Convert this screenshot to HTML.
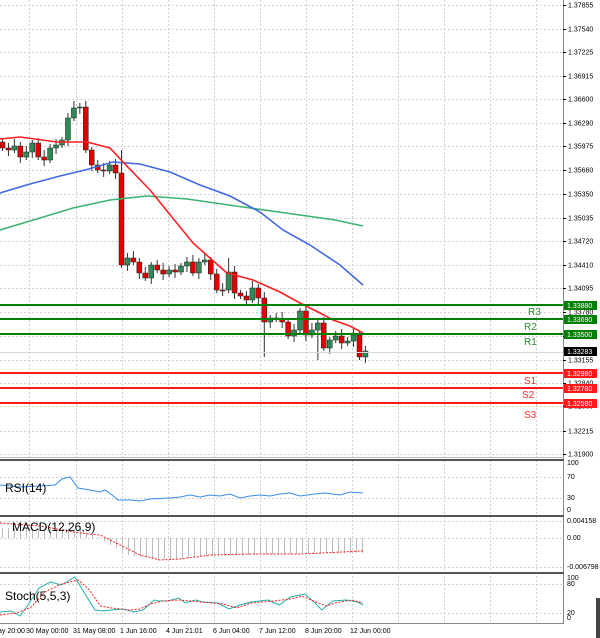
<!DOCTYPE html>
<html><head><meta charset="utf-8"><style>
html,body{margin:0;padding:0;background:#fff;}
svg{display:block;font-family:"Liberation Sans",sans-serif;}
</style></head><body>
<svg id="s" width="600" height="638" viewBox="0 0 600 638" xmlns="http://www.w3.org/2000/svg">
<rect width="600" height="638" fill="#fff"/>
<g id="grid" stroke="#d0d0d0" stroke-dasharray="2,2" stroke-width="1"></g>
<g id="ind"></g>
<g id="cand"></g>
<g id="lines" fill="none" stroke-width="1.6"></g>
<g id="axis" font-size="7" fill="#000"></g>
</svg>
<script>
(function(){
var NS="http://www.w3.org/2000/svg";
function el(p,t,a,txt){var e=document.createElementNS(NS,t);for(var k in a)e.setAttribute(k,a[k]);if(txt!==undefined)e.textContent=txt;document.getElementById(p).appendChild(e);return e;}
var gy=[5,29,52,76,99,123,146,170,194,218,241,265,288,312,336,360,383,406,431,454];
gy.forEach(function(y){el("grid","line",{x1:0,x2:563,y1:y+.5,y2:y+.5});});
var tx=[29,76,122,168,214,260,306,352,398,444,490,536];
tx.forEach(function(x){el("grid","line",{x1:x+.5,x2:x+.5,y1:0,y2:623});});
[477,498,521,538,567,584,613].forEach(function(y){el("grid","line",{x1:0,x2:563,y1:y+.5,y2:y+.5});});
el("axis","line",{x1:563.5,x2:563.5,y1:0,y2:623,stroke:"#888","stroke-width":1});
el("axis","line",{x1:0,x2:564,y1:457.5,y2:457.5,stroke:"#bbb"});
[460,516,573].forEach(function(y){el("axis","rect",{x:0,y:y-1,width:564,height:2,fill:"#555"});});
el("axis","line",{x1:0,x2:564,y1:623.5,y2:623.5,stroke:"#888"});
el("axis","rect",{x:596,y:598,width:4,height:40,fill:"#444"});
var pl=["1.37855","1.37540","1.37225","1.36915","1.36600","1.36290","1.35975","1.35660","1.35350","1.35035","1.34720","1.34410","1.34095","1.33780","1.33470","1.33155","1.32840","1.32530","1.32215","1.31900"];
pl.forEach(function(t,i){el("axis","line",{x1:563,x2:566,y1:gy[i]+.5,y2:gy[i]+.5,stroke:"#000"});el("axis","text",{x:568,y:gy[i]+2.5},t);});
[["100",465],["70",479],["30",500],["0",512],["0.004158",523],["0.00",540],["-0.006798",569],["100",580],["80",586],["20",615],["0",620]].forEach(function(a){el("axis","text",{x:567,y:a[1]},a[0]);});
[["ay 20:00",-2],["30 May 00:00",26],["31 May 08:00",73],["1 Jun 16:00",120],["4 Jun 21:01",166],["6 Jun 04:00",213],["7 Jun 12:00",259],["8 Jun 20:00",305],["12 Jun 00:00",350]].forEach(function(a){el("axis","text",{x:a[1],y:633},a[0]);});
function pts(a){return a.map(function(p){return p[0]+","+p[1]}).join(" ");}
function spts(a){return a.map(function(p){return (p[0]*1.117).toFixed(1)+","+p[1]}).join(" ");}
el("lines","polyline",{stroke:"#3cb371",points:pts([[0,230],[40,218],[73,208],[110,200],[147,196],[187,199],[243,207],[300,215],[335,220],[363,226]])});
el("lines","polyline",{stroke:"#4169e1",points:pts([[0,193],[30,184],[60,176],[85,170],[113,162],[140,164],[170,172],[200,185],[230,196],[260,212],[283,230],[310,245],[340,265],[363,285]])});
el("lines","polyline",{stroke:"#ff2020",points:pts([[0,139],[20,137],[57,142],[87,142],[110,148],[123,162],[150,190],[193,243],[227,273],[253,280],[280,292],[300,303],[320,313],[333,320],[350,326],[363,333]])});
var lv=[[305,"#008000","1.33880","R3",528,315],[319,"#008000","1.33690","R2",524,330],[334,"#008000","1.33500","R1",524,345],[373,"#ff1a1a","1.32980","S1",524,384],[388,"#ff1a1a","1.32780","S2",522,398],[403,"#ff1a1a","1.32590","S3",524,418]];
el("axis","line",{x1:0,x2:563,y1:352.5,y2:352.5,stroke:"#d8d8d8"});
lv.forEach(function(l){el("axis","rect",{x:0,y:l[0]-1,width:563,height:2,fill:l[1]});
el("axis","rect",{x:564,y:l[0]-4,width:33,height:9,fill:l[1]});
el("axis","text",{x:567,y:l[0]+3,fill:"#fff"},l[2]);
el("axis","text",{x:l[4],y:l[5],"font-size":"10",fill:l[1]=="#008000"?"#2e8b2e":"#ff3030"},l[3]);});
el("axis","rect",{x:564,y:347,width:33,height:9,fill:"#000"});
el("axis","text",{x:567,y:354,fill:"#fff"},"1.33283");
var c=[148,150,146,157,152,143,157,160,148,145,140,118,108,107,150,165,170,171,165,173,265,258,262,273,278,265,270,274,270,272,266,262,273,262,260,274,290,290,272,293,296,300,288,298,322,318,319,322,336,330,311,335,330,323,348,340,336,343,341,335,357,351];
var o=142;
for(var i=0;i<c.length;i++){var x=2+i*5.95;var cl=c[i];var up=cl<o;var tp=Math.min(o,cl),bt=Math.max(o,cl);
var hi=tp-3-(i*7%5),lo=bt+3+(i*3%6);if(i==44){lo=357;}if(i==20){hi=150}if(i==53){lo=360}if(i==38){hi=258}
el("cand","line",{x1:x+.5,x2:x+.5,y1:hi,y2:lo,stroke:"#333","stroke-width":1});
el("cand","rect",{x:x-2,y:tp,width:5,height:Math.max(1,bt-tp),fill:up?"#2e8b57":"#e00000",stroke:"#222","stroke-width":.5});
o=cl;}
el("ind","polyline",{fill:"none",stroke:"#3a8ee6","stroke-width":1,points:pts([[0,485],[20,487],[40,486],[55,485],[62,479],[70,477],[78,488],[90,490],[100,492],[105,490],[112,495],[118,500],[130,500],[140,501],[150,499],[170,498],[180,497],[190,495],[200,497],[210,495],[220,496],[230,494],[240,498],[250,496],[260,495],[270,496],[280,494],[290,493],[300,496],[315,494],[325,493],[340,495],[350,492],[363,493]])});
el("ind","text",{x:5,y:492,"font-size":"12",fill:"#000"},"RSI(14)");
var mh=[[0,528],[80,529],[100,538],[110,545],[130,556],[160,560],[200,557],[250,555],[363,553]];
function interp(a,x){for(var j=1;j<a.length;j++){if(x<=a[j][0]){var t=(x-a[j-1][0])/(a[j][0]-a[j-1][0]);return a[j-1][1]+t*(a[j][1]-a[j-1][1]);}}return a[a.length-1][1];}
for(var xx=2;xx<366;xx+=6){var v=interp(mh,xx);el("ind","line",{x1:xx+.5,x2:xx+.5,y1:538,y2:v,stroke:"#bbb","stroke-width":1});}
el("ind","polyline",{fill:"none",stroke:"#ff2020","stroke-width":1,"stroke-dasharray":"2,1.5",points:pts([[0,523],[40,526],[80,533],[100,535],[120,545],[140,555],[160,560],[180,559],[210,555],[250,554],[300,554],[363,551]])});
el("ind","text",{x:12,y:531,"font-size":"12",fill:"#000"},"MACD(12,26,9)");
el("ind","polyline",{fill:"none",stroke:"#20b2aa","stroke-width":1,points:spts([[0,612],[10,611],[18,616],[25,605],[35,588],[45,582],[55,585],[67,577],[75,592],[85,610],[92,611],[100,610],[110,609],[120,612],[128,610],[138,600],[142,601],[150,601],[160,598],[166,603],[175,600],[182,602],[195,603],[205,609],[215,605],[225,602],[240,600],[250,605],[260,597],[273,594],[283,604],[288,610],[298,601],[310,600],[320,602],[325,605]])});
el("ind","polyline",{fill:"none",stroke:"#ff2020","stroke-width":1,"stroke-dasharray":"2,1.5",points:spts([[0,615],[15,613],[28,607],[40,592],[55,584],[70,580],[80,590],[90,606],[100,608],[115,610],[125,609],[135,604],[145,601],[160,600],[180,602],[200,604],[212,608],[225,603],[245,601],[260,599],[270,596],[285,603],[292,606],[300,603],[315,600],[325,603]])});
el("ind","text",{x:5,y:600,"font-size":"12",fill:"#000"},"Stoch(5,5,3)");
})();
</script>
</body></html>
